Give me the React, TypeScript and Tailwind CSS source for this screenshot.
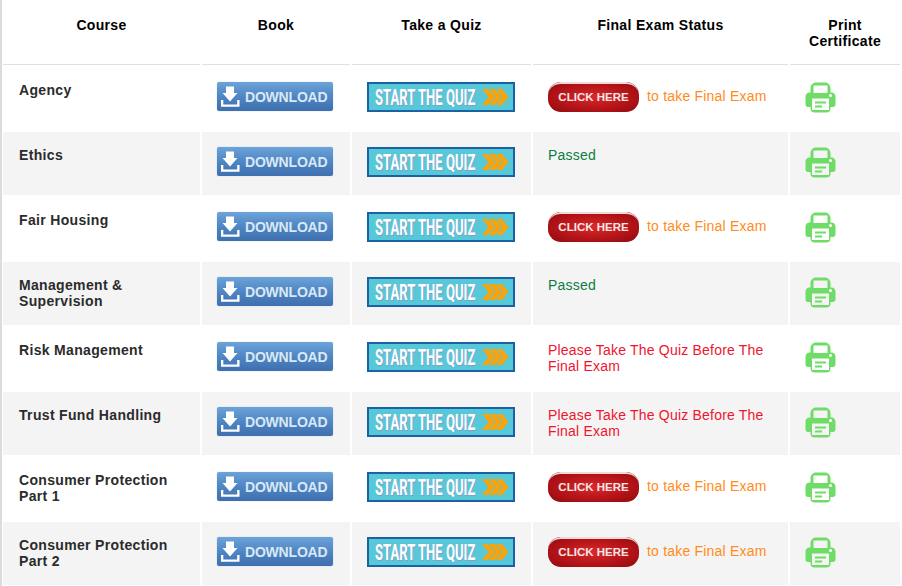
const font = { fontFamily: '"Liberation Sans", Arial, sans-serif' };

function DownloadBtn() {
  return (
    <div className="flex h-[29px] w-[116px] items-center rounded-[2px] bg-gradient-to-b from-[#6ca3d8] via-[#4f86c4] to-[#3f6fae] pl-[3px] shadow-[0_0_1px_#7fa8d6]">
      <svg width="20" height="23" viewBox="0 0 20 23" className="shrink-0">
        <path d="M6 1.500h8v6.500h3.500L10 16.500 2.500 8H6z" fill="#fff" />
        <path d="M1 15v6.700h18.500V15h-2.300v4.400H3.300V15z" fill="#fff" />
      </svg>
      <span className="ml-[5px] text-[14px] font-bold tracking-[-0.2px] text-[#dbe8f5]">DOWNLOAD</span>
    </div>
  );
}

function QuizBtn() {
  return (
    <div className="relative flex h-[30px] w-[148px] items-center overflow-hidden border-[2px] border-[#1a62a3] bg-[#56c8d8] pl-[6px]">
      <span
        style={{ fontFamily: "Roboto, sans-serif" }}
        className="mt-[1px] inline-block origin-left scale-x-[0.595] whitespace-nowrap text-[22px] leading-[22px] font-bold tracking-[0px] text-white [text-shadow:1.5px_1px_0_#7f9fc8]"
      >
        START THE QUIZ
      </span>
      <svg width="28" height="16" viewBox="0 0 28 16" className="absolute right-[3px] top-[5px]">
        <g fill="#f9a30d">
          <path d="M0 0h6l6.500 8-6.500 8H0l6.500-8z" />
          <path d="M7 0h6l6.500 8-6.500 8H7l6.500-8z" />
          <path d="M14 0h6l6.500 8-6.500 8h-6l6.500-8z" />
        </g>
      </svg>
    </div>
  );
}

function ClickHere() {
  return (
    <div className="relative flex h-[30px] w-[91px] shrink-0 items-center justify-center overflow-hidden rounded-[13px] bg-[radial-gradient(ellipse_at_center,#d92a2c_0%,#b51418_55%,#8f0a0e_100%)] text-[11.5px] font-bold tracking-[0px] text-[#f6e6e6]">
      <div className="absolute inset-0 rounded-[13px] border-t-[2px] border-[#f4d8d8]" />
      <span className="relative">CLICK HERE</span>
    </div>
  );
}

function Printer() {
  return (
    <svg width="31" height="31" viewBox="0 0 31 31" className="block">
      <path fill="#6fdc68" fillRule="evenodd" d="M5.500 6C5.500 3 8 .5 11 .5h9c3 0 5.500 2.500 5.500 5.500V10.500h1C28.800 10.500 30.500 12.200 30.500 14.500v8c0 1.500-1 2.500-2.500 2.500h-2.500v1.500c0 2.500-1.500 4-4 4h-12c-2.500 0-4-1.500-4-4V25H3c-1.500 0-2.500-1-2.500-2.500v-8C.5 12.200 2.200 10.500 4.500 10.500h1z M8.500 3.500v7.500h14V3.500z M7 16.500V28h17V16.500z" />
      <circle cx="25.500" cy="13.500" r="1.500" fill="#fff" />
      <rect x="10" y="19.500" width="11" height="2" fill="#6fdc68" />
      <rect x="10" y="23.500" width="7" height="2" fill="#6fdc68" />
    </svg>
  );
}

type Status = "click" | "passed" | "quiz";
const rows: { name: string[]; status: Status }[] = [
  { name: ["Agency"], status: "click" },
  { name: ["Ethics"], status: "passed" },
  { name: ["Fair Housing"], status: "click" },
  { name: ["Management &", "Supervision"], status: "passed" },
  { name: ["Risk Management"], status: "quiz" },
  { name: ["Trust Fund Handling"], status: "quiz" },
  { name: ["Consumer Protection", "Part 1"], status: "click" },
  { name: ["Consumer Protection", "Part 2"], status: "click" },
];

function StatusCell({ status, pad }: { status: Status; pad: string }) {
  if (status === "click")
    return (
      <div className={`flex items-center gap-[8px] ${pad} tracking-[0.2px] text-[#ff8c1a]`}>
        <ClickHere />
        <span className="-mt-[3px]">to take Final Exam</span>
      </div>
    );
  if (status === "passed") return <div className={`${pad} tracking-[0.2px] text-[#0b7f3f]`}>Passed</div>;
  return (
    <div className={`${pad} w-[240px] leading-[16px] tracking-[0.2px] text-[#f0142f]`}>
      Please Take The Quiz Before The Final Exam
    </div>
  );
}

export default function App() {
  const cols = "grid grid-cols-[197px_148px_179px_255px_110px] gap-x-[2px]";
  return (
    <div style={font} className="h-[586px] w-[902px] overflow-hidden bg-white text-[14px] leading-[16px] tracking-[0.33px]">
      <div className="h-full border-l-[2px] border-[#dcdcdc] pl-[1px]">
        <div className={`${cols} h-[65px] font-bold text-black`}>
          {["Course", "Book", "Take a Quiz", "Final Exam Status"].map((h) => (
            <div key={h} className="border-b-[1px] border-[#e0e0e0] pt-[17px] text-center">{h}</div>
          ))}
          <div className="border-b-[1px] border-[#e0e0e0] pt-[17px] text-center">Print<br />Certificate</div>
        </div>
        <div className="flex flex-col gap-[2px]">
          {rows.map((r, i) => {
            const bg = i % 2 === 1 ? "bg-[#f4f4f4]" : "bg-white";
            const pad = i === 0 ? "pt-[17px]" : "pt-[15px]";
            return (
              <div key={i} className={`${cols} ${i === 0 ? "h-[65px]" : "h-[63px]"}`}>
                <div className={`${bg} px-[16px] ${pad} font-bold text-[#2b2b2b]`}>
                  {r.name.map((n) => <div key={n}>{n}</div>)}
                </div>
                <div className={`${bg} pl-[15px] ${pad}`}><DownloadBtn /></div>
                <div className={`${bg} pl-[15px] ${pad}`}><QuizBtn /></div>
                <div className={`${bg} pl-[15px]`}><StatusCell status={r.status} pad={r.status === "passed" ? "pt-[15px]" : pad} /></div>
                <div className={`${bg} pl-[15px] ${pad}`}><Printer /></div>
              </div>
            );
          })}
        </div>
      </div>
    </div>
  );
}
